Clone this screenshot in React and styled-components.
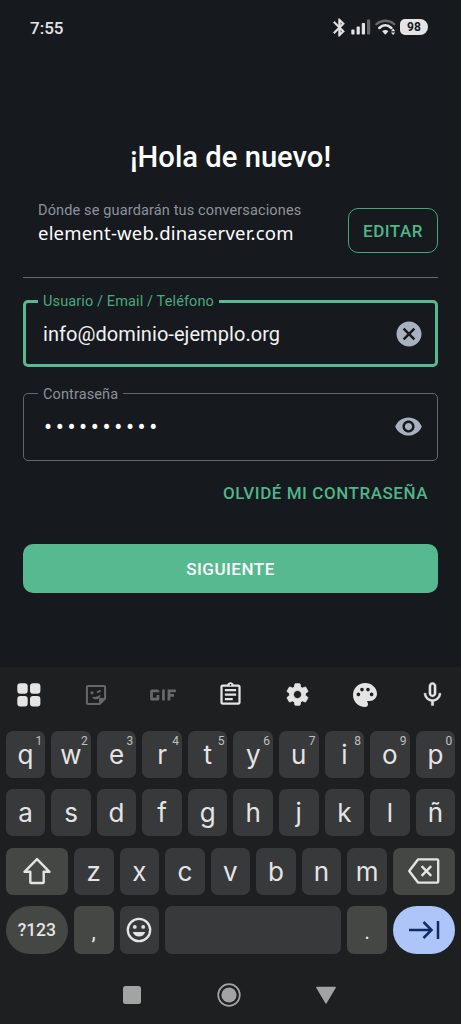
import React from "react";
import styled, { createGlobalStyle } from "styled-components";
import {
  MdBluetooth,
  MdCancel,
  MdGif,
  MdMicNone,
  MdOutlineAssignment,
  MdPalette,
  MdSettings,
  MdVisibility,
} from "react-icons/md";

const topRow = ["q", "w", "e", "r", "t", "y", "u", "i", "o", "p"];
const middleRow = ["a", "s", "d", "f", "g", "h", "j", "k", "l", "ñ"];
const bottomRow = ["z", "x", "c", "v", "b", "n", "m"];

const App = () => {
  return (
    <Screen>
      <GlobalStyle />
      <StatusBar>
        <Clock>7:55</Clock>
        <StatusIcons>
          <BluetoothIcon size={21} />
          <SignalIcon />
          <WifiIcon />
          <Battery>98</Battery>
        </StatusIcons>
      </StatusBar>

      <Login>
        <Title>¡Hola de nuevo!</Title>
        <Server>
          <div>
            <ServerHint>Dónde se guardarán tus conversaciones</ServerHint>
            <ServerName>element-web.dinaserver.com</ServerName>
          </div>
          <EditButton>EDITAR</EditButton>
        </Server>
        <Field $active>
          <Label $active>Usuario / Email / Teléfono</Label>
          <FieldBody>
            <Value>info@dominio-ejemplo.org</Value>
            <MdCancel size={30} />
          </FieldBody>
        </Field>
        <Field>
          <Label>Contraseña</Label>
          <FieldBody>
            <Password>••••••••••</Password>
            <MdVisibility size={29} />
          </FieldBody>
        </Field>
        <ForgotLink>OLVIDÉ MI CONTRASEÑA</ForgotLink>
        <NextButton>SIGUIENTE</NextButton>
      </Login>

      <Keyboard>
        <Toolbar>
          <Tool><GridIcon /></Tool>
          <Tool $dim><StickerIcon /></Tool>
          <Tool $dim><MdGif size={44} /></Tool>
          <Tool><MdOutlineAssignment size={27} /></Tool>
          <Tool><GearIcon size={27} /></Tool>
          <Tool><MdPalette size={30} viewBox="-0.5 -0.5 25 25" /></Tool>
          <Tool><MicIcon size={29} /></Tool>
        </Toolbar>
        <Keys>
          <KeyRow>
            {topRow.map((letter, i) => (
              <Key key={letter}>
                {letter}
                <Digit>{(i + 1) % 10}</Digit>
              </Key>
            ))}
          </KeyRow>
          <KeyRow>
            {middleRow.map((letter) => (
              <Key key={letter}>{letter}</Key>
            ))}
          </KeyRow>
          <KeyRow>
            <WideKey><ShiftIcon /></WideKey>
            {bottomRow.map((letter) => (
              <Key key={letter}>{letter}</Key>
            ))}
            <WideKey><BackspaceIcon /></WideKey>
          </KeyRow>
          <KeyRow>
            <PillKey>?123</PillKey>
            <PunctuationKey>,</PunctuationKey>
            <Key><EmojiIcon /></Key>
            <SpaceKey />
            <PunctuationKey>.</PunctuationKey>
            <PillKey $accent><TabIcon /></PillKey>
          </KeyRow>
        </Keys>
        <NavBar>
          <svg width="24" height="24" viewBox="0 0 24 24">
            <rect x="3" y="3" width="18" height="18" rx="2.5" fill="#a3a3a3" />
          </svg>
          <svg width="24" height="24" viewBox="0 0 24 24">
            <circle cx="12" cy="12" r="10.8" fill="none" stroke="#a3a3a3" strokeWidth="1.7" />
            <circle cx="12" cy="12" r="7.6" fill="#a3a3a3" />
          </svg>
          <svg width="24" height="24" viewBox="0 0 24 24">
            <path d="M2.8 4.5h18.4L12 20z" fill="#a3a3a3" stroke="#a3a3a3" strokeWidth="1.4" strokeLinejoin="round" />
          </svg>
        </NavBar>
      </Keyboard>
    </Screen>
  );
};

const SignalIcon = () => (
  <svg width="20" height="16" viewBox="0 0 20 16" fill="#e4e4e4">
    <rect x="0.3" y="10.6" width="3.2" height="5" rx="0.8" />
    <rect x="5.6" y="7.6" width="3.2" height="8" rx="0.8" />
    <rect x="10.8" y="4" width="3.2" height="11.6" rx="0.8" />
    <rect x="16" y="0.6" width="3.2" height="15" rx="0.8" fill="#66696c" />
  </svg>
);

const WifiIcon = () => (
  <svg width="21" height="16" viewBox="0 0 21 16" fill="none">
    <path d="M1.4 5.2C6.8.6 14 .6 19.2 5.2" stroke="#66696c" strokeWidth="2.3" strokeLinecap="round" />
    <path d="M4.3 8.9c3.6-3.4 8.4-3.4 12 0" stroke="#e4e4e4" strokeWidth="2.7" strokeLinecap="round" />
    <path d="M7.2 12.3c1.8-1.6 4.4-1.6 6.2 0l-3.1 3.5z" fill="#e4e4e4" />
    <path d="M15.9 12.2l2.2-2.6 2.2 2.600zM15.900 13.400l2.200 2.600 2.200-2.600z" fill="#e4e4e4" />
  </svg>
);

const GridIcon = () => (
  <svg width="24" height="24" viewBox="0 0 24 24" fill="currentColor">
    <rect x="0.3" y="0.3" width="10.4" height="10.4" rx="3" />
    <rect x="13" y="0.3" width="10.4" height="10.4" rx="3" />
    <rect x="0.3" y="13" width="10.4" height="10.4" rx="3" />
    <rect x="13" y="13" width="10.4" height="10.4" rx="3" />
  </svg>
);

const StickerIcon = () => (
  <svg width="22" height="22" viewBox="0 0 22 22" fill="none" stroke="currentColor">
    <path d="M3 1.9h16q1.1 0 1.1 1.1v11.6l-5.5 5.5H3q-1.1 0-1.1-1.1V3Q1.9 1.9 3 1.9z" strokeWidth="2" strokeLinejoin="round" />
    <path d="M20.1 14.4h-5.6v5.7z" fill="currentColor" />
    <circle cx="7" cy="8.8" r="1.6" fill="currentColor" stroke="none" />
    <path d="M12 8.3l3.6-1.7" strokeWidth="1.9" />
    <path d="M7 13c3.200.300 6-.6 8.400-2.600.3 3-1.600 4.800-4 4.900-1.900.1-3.400-.7-4.400-2.300z" fill="currentColor" stroke="none" />
  </svg>
);

const ShiftIcon = () => (
  <svg width="30" height="28" viewBox="0 0 30 28" fill="none" stroke="currentColor" strokeWidth="2.4" strokeLinejoin="round">
    <path d="M15 2.1L2.5 14.8H8.3V25.2Q8.3 26 9.1 26H20.9Q21.7 26 21.7 25.2V14.8H27.5Z" />
  </svg>
);

const BackspaceIcon = () => (
  <svg width="34" height="28" viewBox="0 0 34 28" fill="none" stroke="currentColor" strokeWidth="2.4" strokeLinejoin="round">
    <path d="M11 2.4h19q1.2 0 1.2 1.2v20.8q0 1.2-1.2 1.2H11L2.2 14z" />
    <path d="M14.6 9.2l9.6 9.6M24.2 9.2l-9.6 9.6" />
  </svg>
);

const EmojiIcon = () => (
  <svg width="26" height="26" viewBox="0 0 26 26" fill="currentColor">
    <circle cx="13" cy="13" r="11.2" fill="none" stroke="currentColor" strokeWidth="2.3" />
    <circle cx="8.8" cy="9.9" r="1.9" />
    <circle cx="17.2" cy="9.9" r="1.9" />
    <path d="M6.8 15h12.4c-1 3-3.3 4.6-6.2 4.6S7.8 18 6.8 15z" />
  </svg>
);

const TabIcon = () => (
  <svg width="32" height="20" viewBox="0 0 32 20" fill="none" stroke="#102a66" strokeWidth="2.5">
    <path d="M1 10h22.5M15.5 2l8 8-8 8M30 1v18" />
  </svg>
);

const BluetoothIcon = styled(MdBluetooth)`
  margin-right: -3px;
  path:not([fill="none"]) {
    stroke: currentColor;
    stroke-width: 0.7px;
  }
`;

const GearIcon = styled(MdSettings)`
  path:not([fill="none"]) {
    stroke: currentColor;
    stroke-width: 0.7px;
    stroke-linejoin: round;
  }
`;

const MicIcon = styled(MdMicNone)`
  path:not([fill="none"]) {
    stroke: currentColor;
    stroke-width: 0.35px;
  }
`;

const GlobalStyle = createGlobalStyle`
  * {
    box-sizing: border-box;
  }
  body {
    margin: 0;
    background: #16191e;
  }
  button {
    font-family: inherit;
    cursor: pointer;
  }
`;

const Screen = styled.div`
  display: flex;
  flex-direction: column;
  width: 461px;
  height: 1024px;
  overflow: hidden;
  background: #16191e;
  color: white;
  font-family: Roboto, sans-serif;
`;

const StatusBar = styled.header`
  display: flex;
  justify-content: space-between;
  align-items: center;
  height: 54px;
  padding: 0 33px 0 30px;
  color: #e4e4e4;
`;

const Clock = styled.span`
  font-size: 17px;
  font-weight: 500;
  padding-top: 1px;
`;

const StatusIcons = styled.div`
  display: flex;
  align-items: center;
  gap: 4px;
`;

const Battery = styled.span`
  width: 28px;
  height: 16px;
  border-radius: 5px 8px 8px 5px;
  background: #e4e4e4;
  color: #16191e;
  font-size: 12px;
  font-weight: 700;
  line-height: 16px;
  text-align: center;
`;

const Login = styled.main`
  display: flex;
  flex-direction: column;
  height: 613px;
  padding: 83px 23px 0;
`;

const Title = styled.h1`
  margin: 0;
  font-size: 29.2px;
  font-weight: 500;
  line-height: 40px;
  text-align: center;
`;

const Server = styled.section`
  display: flex;
  justify-content: space-between;
  align-items: flex-start;
  height: 101px;
  padding: 23px 0 0 15px;
  border-bottom: 1px solid #646a76;
`;

const ServerHint = styled.div`
  padding-top: 1px;
  color: #8d939d;
  font-size: 14.5px;
  line-height: 20px;
  letter-spacing: 0.14px;
`;

const ServerName = styled.div`
  font-family: "Noto Sans", sans-serif;
  font-size: 18.5px;
  line-height: 24px;
  letter-spacing: 0.2px;
`;

const EditButton = styled.button`
  width: 90px;
  height: 45px;
  margin-top: 8px;
  padding: 0;
  border: 1px solid #45a47c;
  border-radius: 10px;
  background: none;
  color: #4fb58a;
  font-size: 17px;
  font-weight: 500;
  letter-spacing: 0.5px;
`;

const Field = styled.fieldset`
  height: ${(props) => (props.$active ? "76px" : "78px")};
  margin: ${(props) => (props.$active ? "13px 0 0" : "16px 0 0")};
  padding: ${(props) => (props.$active ? "0 11px 0 12px" : "0 14px")};
  border: ${(props) => (props.$active ? "3px solid #57b98f" : "1px solid #62666e")};
  border-radius: 5px;
  color: #a9b1bf;
`;

const Label = styled.legend`
  height: 20px;
  padding: 0 5px;
  color: ${(props) => (props.$active ? "#4aa87f" : "#8d9199")};
  font-size: 14.5px;
  line-height: ${(props) => (props.$active ? "22px" : "23px")};
  letter-spacing: 0.12px;
`;

const FieldBody = styled.div`
  display: flex;
  justify-content: space-between;
  align-items: center;
  height: 46px;
  padding-left: 5px;
`;

const Value = styled.span`
  color: #f2f2f2;
  font-size: 20px;
  letter-spacing: 0.06px;
`;

const Password = styled.span`
  padding: 2px 0 0 1px;
  color: white;
  font-size: 24px;
  letter-spacing: 3.6px;
`;

const ForgotLink = styled.a`
  align-self: flex-end;
  margin: 21px 10px 0 0;
  color: #4fb58a;
  font-size: 17px;
  font-weight: 500;
  line-height: 22px;
  letter-spacing: 0.54px;
`;

const NextButton = styled.button`
  height: 49px;
  margin-top: 40px;
  border: none;
  border-radius: 10px;
  background: #57b98f;
  color: white;
  font-size: 17px;
  font-weight: 500;
  letter-spacing: 0.5px;
`;

const Keyboard = styled.section`
  flex: 1;
  background: #1e1f21;
  color: #e4e4e4;
  font-family: Inter, Roboto, sans-serif;
`;

const Toolbar = styled.div`
  display: flex;
  justify-content: space-between;
  align-items: center;
  height: 54px;
  padding: 1px 5.5px 0;
`;

const Tool = styled.div`
  display: flex;
  justify-content: center;
  align-items: center;
  width: 46px;
  height: 46px;
  color: ${(props) => (props.$dim ? "#67686a" : "#e4e4e4")};
`;

const Keys = styled.div`
  display: flex;
  flex-direction: column;
  gap: 11.7px;
  padding: 9.8px 5.7px 0;
`;

const KeyRow = styled.div`
  display: flex;
  gap: 6px;
  height: 46.8px;

  &:last-child {
    height: 47.6px;
  }
`;

const Key = styled.div`
  position: relative;
  display: flex;
  justify-content: center;
  align-items: center;
  flex: 0 0 39.56px;
  border-radius: 7px;
  background: #38393b;
  font-size: 26px;
`;

const Digit = styled.span`
  position: absolute;
  top: 3px;
  right: 3px;
  color: #c0c0c0;
  font-family: Roboto, sans-serif;
  font-size: 12px;
  line-height: 14px;
`;

const WideKey = styled(Key)`
  flex-basis: 62.3px;
  background: #454745;
`;

const PunctuationKey = styled(Key)`
  padding-top: 2px;
  background: #454745;
  font-family: Roboto, sans-serif;
  font-size: 22px;
`;

const SpaceKey = styled(Key)`
  flex: 1;
`;

const PillKey = styled(Key)`
  flex-basis: 62.3px;
  border-radius: 24px;
  background: ${(props) => (props.$accent ? "#adc5f8" : "#454745")};
  font-family: Roboto, sans-serif;
  font-size: 17.5px;
  font-weight: 500;
`;

const NavBar = styled.nav`
  display: flex;
  justify-content: center;
  gap: 73px;
  padding: 29px 4px 0 0;
`;

export default App;
